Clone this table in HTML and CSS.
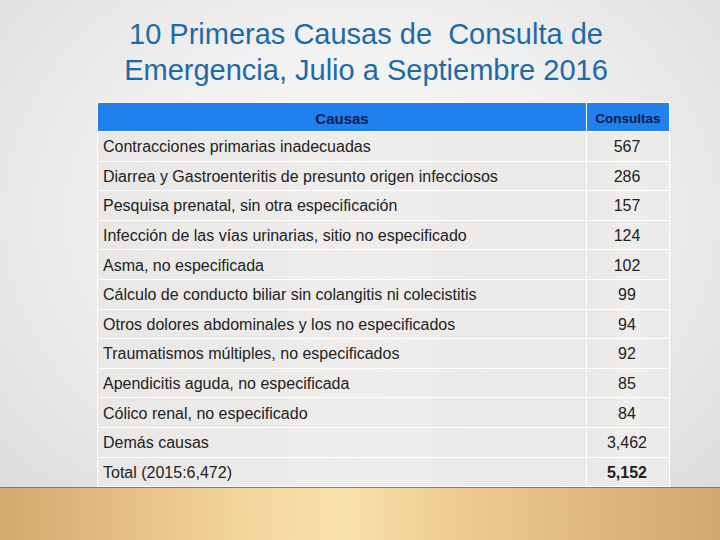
FILE: index.html
```html
<!DOCTYPE html>
<html lang="es">
<head>
<meta charset="utf-8">
<title>10 Primeras Causas de Consulta de Emergencia</title>
<link rel="stylesheet" href="styles.css">
</head>
<body>
<div class="slide">
  <h1 class="title">10 Primeras Causas de &nbsp;Consulta de<br>Emergencia, Julio a Septiembre 2016</h1>
  <div class="table">
    <div class="th th-cause">Causas</div>
    <div class="th th-num">Consultas</div>
    <div class="td">Contracciones primarias inadecuadas</div><div class="td num">567</div>
    <div class="td">Diarrea y Gastroenteritis de presunto origen infecciosos</div><div class="td num">286</div>
    <div class="td">Pesquisa prenatal, sin otra especificación</div><div class="td num">157</div>
    <div class="td">Infección de las vías urinarias, sitio no especificado</div><div class="td num">124</div>
    <div class="td">Asma, no especificada</div><div class="td num">102</div>
    <div class="td">Cálculo de conducto biliar sin colangitis ni colecistitis</div><div class="td num">99</div>
    <div class="td">Otros dolores abdominales y los no especificados</div><div class="td num">94</div>
    <div class="td">Traumatismos múltiples, no especificados</div><div class="td num">92</div>
    <div class="td">Apendicitis aguda, no especificada</div><div class="td num">85</div>
    <div class="td">Cólico renal, no especificado</div><div class="td num">84</div>
    <div class="td">Demás causas</div><div class="td num">3,462</div>
    <div class="td">Total (2015:6,472)</div><div class="td num total">5,152</div>
  </div>
  <div class="floor"></div>
</div>
</body>
</html>
```
FILE: styles.css
```css
html, body {
  margin: 0;
  padding: 0;
}
body {
  width: 720px;
  height: 540px;
  overflow: hidden;
  font-family: "Liberation Sans", Arial, sans-serif;
}
.slide {
  width: 720px;
  height: 540px;
  display: flex;
  flex-direction: column;
  background: radial-gradient(ellipse 70% 75% at 50% 40%, #fbfbfb 0%, #f1f1f1 45%, #dcdcdc 100%);
}
.title {
  margin: 0;
  padding-top: 16px;
  height: 102px;
  box-sizing: border-box;
  text-align: center;
  font-weight: normal;
  font-size: 29px;
  line-height: 36px;
  color: #1d6aa9;
  padding-left: 12px;
}
.table {
  margin-left: 97px;
  width: 573px;
  box-sizing: border-box;
  display: grid;
  grid-template-columns: 488px 1fr;
  grid-template-rows: 28px repeat(12, 28.6px);
  gap: 1px;
  padding: 1px;
  background: #ffffff;
}
.th {
  background: #1f80ee;
  color: #0c1850;
  font-weight: bold;
  display: flex;
  align-items: center;
  justify-content: center;
  padding-top: 3px;
  box-sizing: border-box;
}
.th-cause {
  font-size: 15px;
}
.th-num {
  font-size: 13.5px;
}
.td {
  background: linear-gradient(90deg, #e9e8e6, #eeedeb 50%, #ebeae8);
  color: #222222;
  font-size: 16px;
  display: flex;
  align-items: center;
  padding-left: 5px;
  padding-top: 2px;
  box-sizing: border-box;
  white-space: nowrap;
}
.num {
  justify-content: center;
  padding-left: 0;
  padding-right: 2px;
}
.total {
  font-weight: bold;
}
.floor {
  flex: 1;
  border-top: 1px solid #8a7a5e;
  background: linear-gradient(90deg, #d3a86c 0%, #e6c086 18%, #f5d79e 35%, #f9e2ab 48%, #f0cd92 62%, #e1bb82 80%, #d2a76d 100%);
}
```
